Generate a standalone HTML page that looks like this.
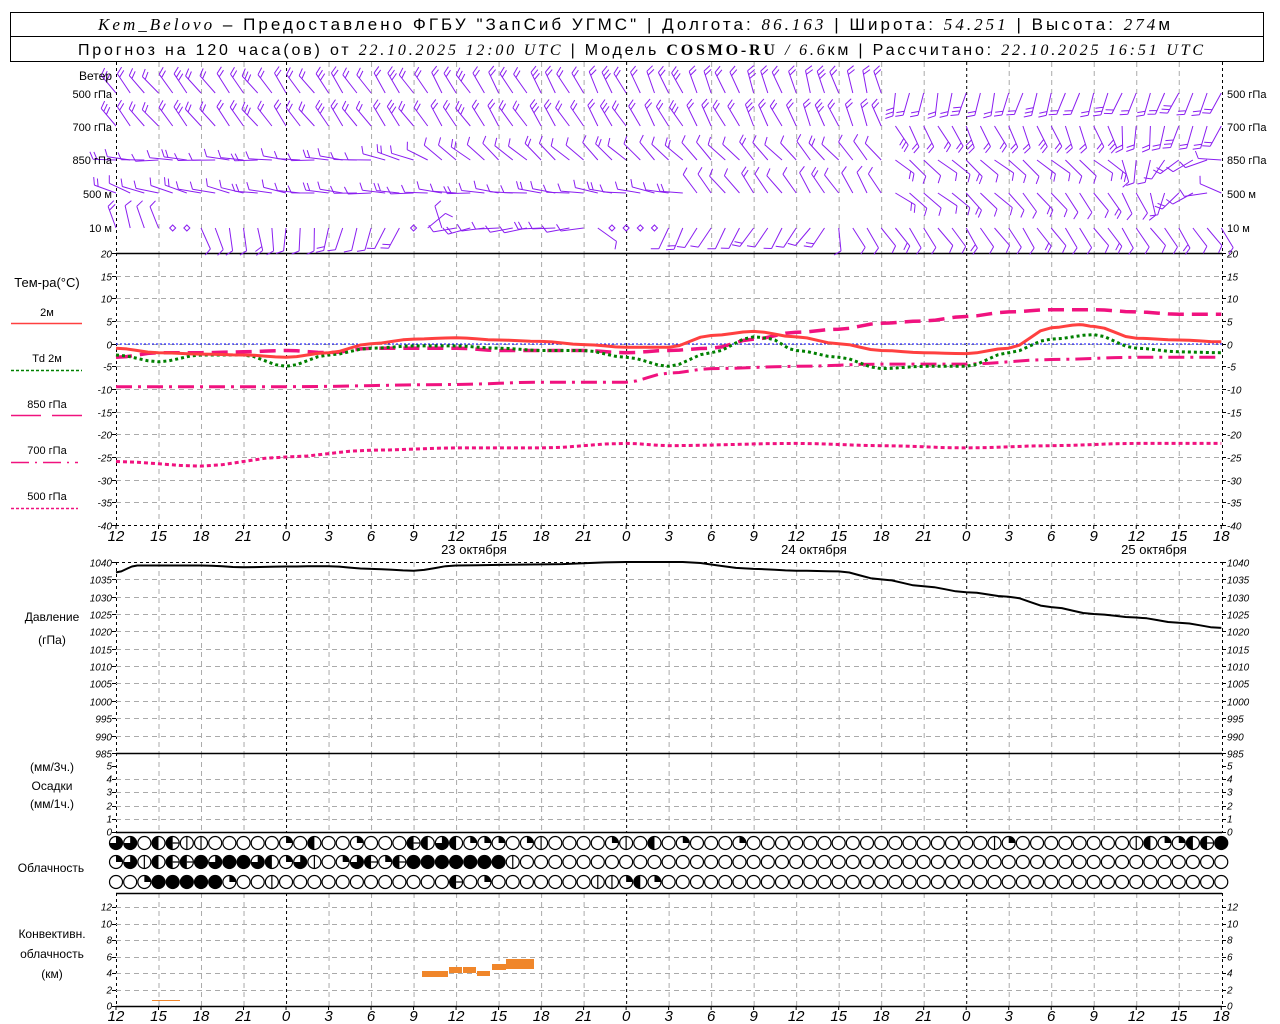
<!DOCTYPE html>
<html><head><meta charset="utf-8">
<style>
html,body{margin:0;padding:0;background:#fff;width:1280px;height:1024px;overflow:hidden}
svg{display:block}
text{font-family:"Liberation Sans","DejaVu Sans",sans-serif;fill:#000}
.it{font-family:"Liberation Serif",serif;font-style:italic}
.ax{font-size:10px;font-style:italic;font-family:"Liberation Sans",sans-serif}
.tx{font-size:15px;font-style:italic;font-family:"Liberation Sans",sans-serif}
</style></head><body>
<svg id="s" width="1280" height="1024" xmlns="http://www.w3.org/2000/svg">
<rect x="0" y="0" width="1280" height="1024" fill="#fff"/>
<rect x="10.5" y="12.5" width="1253" height="49" fill="none" stroke="#000"/>
<line x1="10" y1="36.5" x2="1264" y2="36.5" stroke="#000"/>
<text x="98" y="30" font-size="17" textLength="1072" lengthAdjust="spacing"><tspan class="it">Kem_Belovo</tspan> – Предоставлено ФГБУ "ЗапСиб УГМС" | Долгота: <tspan class="it">86.163</tspan> | Широта: <tspan class="it">54.251</tspan> | Высота: <tspan class="it">274</tspan>м</text>
<text x="78" y="55" font-size="16" textLength="1125" lengthAdjust="spacing">Прогноз на 120 часа(ов) от <tspan class="it">22.10.2025 12:00 UTC</tspan>  | Модель <tspan font-weight="bold" font-family="Liberation Serif">COSMO-RU</tspan> <tspan class="it">/ 6.6</tspan>км | Рассчитано: <tspan class="it">22.10.2025 16:51 UTC</tspan></text>
<g id="g"></g>
</svg>
<script>
(function(){
var NS="http://www.w3.org/2000/svg",g=document.getElementById("g");
function el(t,a,txt){var e=document.createElementNS(NS,t);for(var k in a)e.setAttribute(k,a[k]);if(txt!=null)e.textContent=txt;g.appendChild(e);return e;}
function X(h){return 116+h*14.17;}
var L=116,R=1222;
function ln(x1,y1,x2,y2,c,w,d){var a={x1:x1,y1:y1,x2:x2,y2:y2,stroke:c,"stroke-width":w||1};if(d)a["stroke-dasharray"]=d;el("line",a);}
var panels=[[62,253],[253,525],[562,753],[753,832],[893,1006]];
panels.forEach(function(p){
 for(var h=3;h<78;h+=3){var mid=(h==12||h==36||h==60);ln(X(h)+.5,p[0],X(h)+.5,p[1],mid?"#000":"#aaa",1,mid?"3,3":"5,4");}
 ln(L+.5,p[0],L+.5,p[1],"#000",1,"3,3");ln(R+.5,p[0],R+.5,p[1],"#000",1,"3,3");
});
function TY(v){return 253+(20-v)*4.533;}
for(var v=20;v>=-40;v-=5){var y=Math.round(TY(v))+.5;if(v<20&&v>-40)ln(L,y,R,y,"#aaa",1,"5,4");
 ln(L-4,y,L,y,"#000");ln(R,y,R+4,y,"#000");
 el("text",{x:112,y:y+4,"text-anchor":"end","class":"ax"},""+v);el("text",{x:1227,y:y+4,"class":"ax"},""+v);}
ln(L,253.5,R,253.5,"#000",1.5);ln(L,525.5,R,525.5,"#000",1,"3,3");
ln(L,344,R,344,"#0000ff",1,"2,2");
function PY(p){return 562+(1040-p)*3.47;}
for(var p=1040;p>=985;p-=5){var y=Math.round(PY(p))+.5;if(p<1040&&p>985)ln(L,y,R,y,"#aaa",1,"5,4");
 ln(L-4,y,L,y,"#000");ln(R,y,R+4,y,"#000");
 el("text",{x:112,y:y+4,"text-anchor":"end","class":"ax","font-size":"9"},""+p);el("text",{x:1227,y:y+4,"class":"ax","font-size":"9"},""+p);}
ln(L,562.5,R,562.5,"#000",1,"3,3");ln(L,753.5,R,753.5,"#000",1.5);
for(var i=0;i<=5;i++){var y=Math.round(832-i*13.2)+.5;if(i>0&&i<5)ln(L,y,R,y,"#aaa",1,"5,4");
 ln(L-4,y,L,y,"#000");ln(R,y,R+4,y,"#000");
 el("text",{x:112,y:y+3,"text-anchor":"end","class":"ax","font-size":"9"},""+i);el("text",{x:1227,y:y+3,"class":"ax","font-size":"9"},""+i);}
ln(L,832.5,R,832.5,"#000",1.5);
for(var i=0;i<=12;i+=2){var y=Math.round(1006-i*8.25)+.5;if(i>0)ln(L,y,R,y,"#aaa",1,"5,4");
 ln(L-4,y,L,y,"#000");ln(R,y,R+4,y,"#000");
 el("text",{x:112,y:y+3,"text-anchor":"end","class":"ax","font-size":"9"},""+i);el("text",{x:1227,y:y+3,"class":"ax","font-size":"9"},""+i);}
ln(L,893.5,R,893.5,"#000",1.5);ln(L,1006.5,R,1006.5,"#000",1.5);
var hrs=[12,15,18,21,0,3,6,9,12,15,18,21,0,3,6,9,12,15,18,21,0,3,6,9,12,15,18];
hrs.forEach(function(v,i){var x=X(i*3);
 el("text",{x:x,y:541,"text-anchor":"middle","class":"tx"},""+v);
 el("text",{x:x,y:1021,"text-anchor":"middle","class":"tx"},""+v);
 ln(x,525,x,529,"#000");ln(x,1006,x,1010,"#000");});
[["23 октября",474],["24 октября",814],["25 октября",1154]].forEach(function(d){el("text",{x:d[1],y:554,"text-anchor":"middle","font-size":"13"},d[0]);});
function curve(pts,f,c,w,d){var s="";
 for(var i=0;i<pts.length;i++){s+=(i?"L":"M")+X(pts[i][0]).toFixed(1)+","+f(pts[i][1]).toFixed(1);}
 var a={d:s,fill:"none",stroke:c,"stroke-width":w,"stroke-linejoin":"round"};if(d)a["stroke-dasharray"]=d;el("path",a);}
function sm(k){var o=[];for(var i=0;i<k.length-1;i++){var a=k[i],b=k[i+1];for(var t=0;t<1;t+=0.25){var u=(1-Math.cos(t*Math.PI))/2;o.push([a[0]+(b[0]-a[0])*t,a[1]+(b[1]-a[1])*u]);}}o.push(k[k.length-1]);return o;}
var pk="#f0127f";
curve(sm([[0,-26],[6,-27],[12,-25],[18,-23.5],[24,-23],[30,-23],[36,-22],[39,-22.5],[48,-22],[54,-22.5],[60,-23],[66,-22.5],[72,-22],[78,-22]]),TY,pk,3,"4,3");
curve(sm([[0,-9.5],[12,-9.5],[24,-9],[30,-8.5],[36,-8.5],[39,-6.5],[42,-5.5],[48,-5],[54,-4.5],[60,-4.5],[66,-3.5],[72,-3],[78,-3]]),TY,pk,3,"16,6,3,6");
curve(sm([[0,-3],[3,-2],[6,-2],[9,-1.8],[12,-1.5],[15,-2],[18,-1],[21,-1],[24,-1],[27,-1.5],[30,-1.5],[33,-1.5],[36,-2],[39,-1.5],[42,-1],[45,1],[48,2.5],[51,3.2],[54,4.5],[57,5],[60,6],[63,7],[66,7.5],[69,7.5],[72,7],[75,6.5],[78,6.5]]),TY,pk,3.5,"16,8");
curve(sm([[0,-2.5],[3,-4],[6,-2.5],[9,-2.5],[12,-5],[15,-2.5],[18,-1],[21,-0.5],[24,-0.5],[27,-1],[30,-1.5],[33,-1.5],[36,-3],[39,-5],[42,-2],[45,1.5],[46,1.2],[48,-1.5],[51,-3],[54,-5.5],[57,-5],[60,-5],[63,-2],[66,1],[69,2],[72,-1],[75,-1.8],[78,-2]]),TY,"#008000",3,"3,3");
curve(sm([[0,-1],[3,-2],[6,-2.3],[9,-2.5],[12,-3],[15,-2],[18,0],[21,1],[24,1.3],[27,0.8],[30,0.5],[33,-0.2],[36,-0.8],[39,-0.8],[42,1.8],[45,2.7],[48,1.5],[51,0],[54,-1.5],[57,-2],[60,-2.2],[63,-1],[66,3.5],[68,4.2],[69,3.8],[72,1.2],[75,0.8],[78,0.4]]),TY,"#ff4040",3);
curve(sm([[0,1037],[1.5,1039],[6,1039],[9,1038.5],[12,1038.7],[15,1038.8],[18,1038],[21,1037.5],[24,1039],[30,1039.3],[36,1040],[40,1040],[45,1038],[48,1037.5],[51,1037.3],[54,1035],[57,1033],[60,1031.3],[63,1030],[66,1027],[69,1025],[72,1024],[75,1022.5],[78,1021]]),PY,"#000",2);
[[422,971,26,6],[449,967,13,6],[463,967,13,6],[477,971,13,5],[492,964,14,6],[506,959,28,10]].forEach(function(r){el("rect",{x:r[0],y:r[1],width:r[2],height:r[3],fill:"#f0862a"});});
ln(152,1000.5,180,1000.5,"#f0862a",1);
function cl(x,y,c){var r=6.5;
 el("circle",{cx:x,cy:y,r:r,fill:"#fff",stroke:"#000","stroke-width":1.2});
 if(c=="8")el("circle",{cx:x,cy:y,r:r,fill:"#000"});
 if(c=="1"){ln(x,y-r,x,y+r,"#000",1.2);}
 if(c=="9"){el("path",{d:"M"+x+","+(y-r)+"A"+r+","+r+" 0 0 0 "+x+","+(y+r)+"Z",fill:"#000"});ln(x,y,x+r,y,"#000",1.2);}
 if(c=="2")el("path",{d:"M"+x+","+y+"L"+x+","+(y-r)+"A"+r+","+r+" 0 0 1 "+(x+r)+","+y+"Z",fill:"#000"});
 if(c=="4")el("path",{d:"M"+x+","+(y-r)+"A"+r+","+r+" 0 0 0 "+x+","+(y+r)+"Z",fill:"#000"});
 if(c=="6")el("path",{d:"M"+x+","+y+"L"+(x-r)+","+y+"A"+r+","+r+" 0 1 0 "+x+","+(y-r)+"Z",fill:"#000"});
}
var r1="6604911000002040020009464222021000021040200020000000000000000012000000000001422698".split("");
r1[72]="1";r1[73]="4";r1[74]="2";r1[75]="2";r1[76]="4";r1[77]="9";r1[78]="8";
var r2="26149986886426102692988888881000000000000000000000000000000000000000000000000000".split("");
var r3="00288888200100000000000095200000001124200000000000000000000000000000000000000000".split("");
for(var i=0;i<79;i++){var x=X(i);cl(x,843,r1[i]||"0");cl(x,862,r2[i]||"0");cl(x,882,r3[i]||"0");}
var WC="#8a1ef0";
function interp(k,h){for(var i=0;i<k.length-1;i++){if(h>=k[i][0]&&h<=k[i+1][0]){var t=(h-k[i][0])/(k[i+1][0]-k[i][0]||1);return k[i][1]+(k[i+1][1]-k[i][1])*t;}}return k[k.length-1][1];}
function barb(x,y,th,n){var a=th*Math.PI/180,Ls=23,sx=Math.sin(a),sy=-Math.cos(a);
 var tx=x+Ls*sx,ty=y+Ls*sy;var s="M"+x.toFixed(1)+","+y.toFixed(1)+"L"+tx.toFixed(1)+","+ty.toFixed(1);
 var fa=(th+65)*Math.PI/180;
 for(var k=0;k<n;k++){var px=x+(Ls-k*4)*sx,py=y+(Ls-k*4)*sy;s+="M"+px.toFixed(1)+","+py.toFixed(1)+"l"+(8*Math.sin(fa)).toFixed(1)+","+(-8*Math.cos(fa)).toFixed(1);}
 el("path",{d:s,stroke:WC,"stroke-width":1,fill:"none"});}
var rows=[
 [93,[[0,-40],[30,-30],[54,-15],[54.5,190],[78,205]],2],
 [126,[[0,-40],[40,-30],[54,-20],[55,150],[70,160],[72,185],[78,205]],2],
 [160,[[0,-88],[18,-85],[24,-50],[54,-40],[55,130],[70,130],[72,185],[78,270]],1],
 [193,[[0,-70],[18,-88],[40,-80],[41,-40],[54,-30],[55,125],[72,150],[78,290]],1],
 [228,[[0,-20],[4,-15],[6,160],[18,200],[20,205],[24,-100],[33,-95],[34,120],[36,205],[50,215],[52,145],[78,145]],1]];
var calm={228:[4,5,21,35,36,37,38]};
rows.forEach(function(r){for(var h=0;h<79;h++){if(calm[r[0]]&&calm[r[0]].indexOf(h)>=0){el("path",{d:"M"+(X(h)-3)+","+r[0]+"l3,-3l3,3l-3,3z",fill:"none",stroke:WC});continue;}
 var th=interp(r[1],h);th+=Math.sin(h*1.7)*6;barb(X(h),r[0],th,r[2]+(h%5==0?1:0));}});
function t(x,y,s,a,fs,cls){var o={x:x,y:y,"font-size":fs||12};if(a)o["text-anchor"]=a;if(cls)o["class"]=cls;return el("text",o,s);}
t(112,80,"Ветер","end",12);
[["500 гПа",98],["700 гПа",131],["850 гПа",164],["500  м",198],["10   м",232]].forEach(function(l){t(112,l[1],l[0],"end",11);t(1227,l[1],l[0],null,11);});
t(47,287,"Тем-ра(°С)","middle",13);
t(47,316,"2м","middle",11);ln(11,323.5,82,323.5,"#ff4040",1.5);
t(47,362,"Td  2м","middle",11);ln(11,370.5,82,370.5,"#008000",1.5,"3,2");
t(47,408,"850 гПа","middle",11);ln(11,415.5,41,415.5,pk,1.5);ln(52,415.5,82,415.5,pk,1.5);
t(47,454,"700 гПа","middle",11);ln(11,462.5,78,462.5,pk,1.5,"18,6,2,6");
t(47,500,"500 гПа","middle",11);ln(11,508.5,78,508.5,pk,1.5,"3,2");
t(52,621,"Давление","middle",12);t(52,644,"(гПа)","middle",12);
t(52,771,"(мм/3ч.)","middle",12);t(52,790,"Осадки","middle",12);t(52,808,"(мм/1ч.)","middle",12);
t(51,872,"Облачность","middle",12);
t(52,938,"Конвективн.","middle",12);t(52,958,"облачность","middle",12);t(52,978,"(км)","middle",12);
})();
</script>
</body></html>
